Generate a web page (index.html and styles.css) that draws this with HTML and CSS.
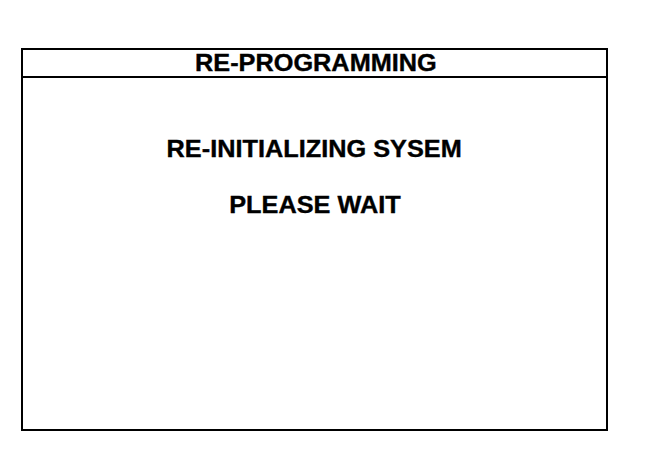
FILE: index.html
```html
<!DOCTYPE html>
<html lang="en">
<head>
<meta charset="utf-8">
<title>RE-PROGRAMMING</title>
<link rel="stylesheet" href="styles.css">
</head>
<body>
<div class="panel">
  <div class="panel-header"><span class="wide">RE-PROGRAMMING</span></div>
  <div class="panel-body">
    <div class="msg"><span class="wide">RE-INITIALIZING SYSEM</span></div>
    <div class="msg"><span class="wide">PLEASE WAIT</span></div>
  </div>
</div>
</body>
</html>
```

FILE: styles.css
```css
html, body {
  margin: 0;
  padding: 0;
  background: #fff;
}
body {
  width: 672px;
  height: 450px;
  overflow: hidden;
  font-family: "Liberation Sans", Arial, sans-serif;
  font-weight: bold;
  font-size: 23px;
  color: #000;
  -webkit-text-stroke: 0.35px #000;
}
.panel {
  box-sizing: border-box;
  margin: 48px 0 0 21px;
  width: 587px;
  height: 383px;
  border: 2px solid #000;
  display: flex;
  flex-direction: column;
}
.panel-header {
  height: 28px;
  box-sizing: border-box;
  border-bottom: 2px solid #000;
  padding-bottom: 2px;
  line-height: 26px;
  text-align: center;
  padding-left: 2px;
}
.panel-body {
  padding-top: 57px;
  display: flex;
  flex-direction: column;
  align-items: center;
  gap: 28px;
}
.msg {
  line-height: 28px;
  text-align: center;
}
.wide {
  display: inline-block;
  transform: scaleX(1.1);
  transform-origin: center;
}
```
